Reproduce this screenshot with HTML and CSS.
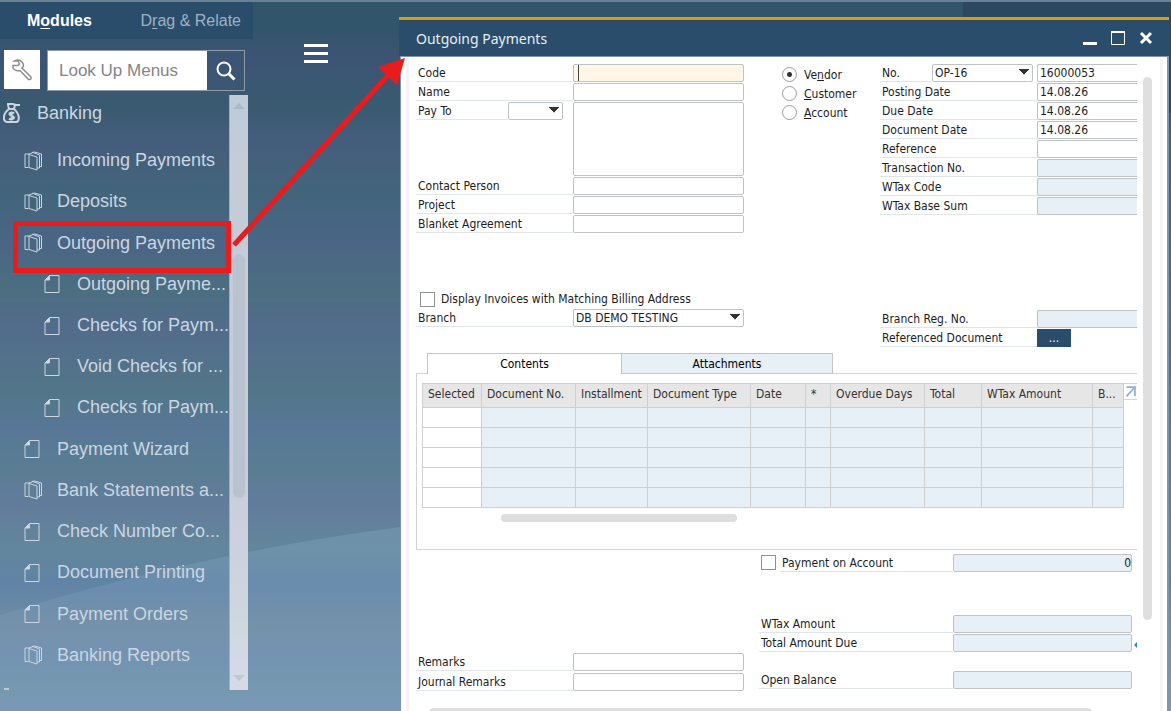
FILE: index.html
```html
<!DOCTYPE html>
<html lang="en">
<head>
  <meta charset="UTF-8" />
  <meta name="viewport" content="width=device-width, initial-scale=1.0" />
  <title>Outgoing Payments</title>
  <link rel="stylesheet" href="styles.css">
</head>
<body>

<!-- Shared icons -->
<svg class="sprite" aria-hidden="true">
  <symbol id="folder" viewBox="0 0 18 20">
    <path d="M5 3H1v13.500h3.500M5 3v13.500l8 2.500V6L5 3.500M5 3l4-1.500 6.500 2.500V17H13M8 1.500 10.500 1l7 2v12.500h-2" />
  </symbol>
  <symbol id="page" viewBox="0 0 18 20">
    <path d="M5.500 1.500H15v17H1V6z" />
    <path class="fold" d="M5.500 1.500V6H1z" />
  </symbol>
</svg>

<!-- Desktop wallpaper curve -->
<svg class="wave" viewBox="0 0 400 184" preserveAspectRatio="none" aria-hidden="true">
  <defs>
    <linearGradient id="waveFill" x1="0" y1="0" x2="0" y2="1">
      <stop offset="0" stop-color="#8fb0cc" stop-opacity=".3" />
      <stop offset="1" stop-color="#8fb0cc" stop-opacity="0" />
    </linearGradient>
  </defs>
  <path d="M0 88Q190 28 400 0V184H0z" fill="url(#waveFill)" />
</svg>

<div class="desktop">

  <!-- Main Menu -->
  <aside class="sidebar">
    <div class="tabs">
      <button class="tab active">M<u>o</u>dules</button>
      <button class="tab">D<u>r</u>ag &amp; Relate</button>
    </div>

    <div class="search">
      <button class="tool" aria-label="Menu settings">
        <svg viewBox="0 0 22 22"><path d="M2 6.500h5L8.500 5 7 2H3.500Q8-.500 11 3t0 6l9 9q.5 3-2.500 2.500L9 11.500Q4 12.500 2 9z" /></svg>
      </button>
      <div class="search-box">
        <input type="text" aria-label="Look Up Menus" placeholder="Look Up Menus" />
        <button aria-label="Search">
          <svg viewBox="0 0 20 20"><circle cx="8" cy="8" r="6.500" /><path d="m12.500 12.500 6 6" stroke-width="3" /></svg>
        </button>
      </div>
    </div>

    <div class="menu">
      <nav>
        <a class="module" href="#">
          <svg viewBox="0 0 18 20"><path d="M4 1h6l3 1h4M5 2l1 4h5l1-4M6 6C-1 11 0 19 4 19h9c4 0 4-8-2-13" /><path d="M11 10.500C9.500 9 6 9.500 6.500 11.500c.5 1.500 4.500 1 4.500 3s-3.500 2.500-5 1M8.600 8.500v9" /></svg>
          Banking
        </a>
        <ul>
          <li><a href="#"><svg><use href="#folder" /></svg><span>Incoming Payments</span></a></li>
          <li><a href="#"><svg><use href="#folder" /></svg><span>Deposits</span></a></li>
          <li class="marked"><a href="#"><svg><use href="#folder" /></svg><span>Outgoing Payments</span></a></li>
          <li class="sub"><a href="#"><svg><use href="#page" /></svg><span>Outgoing Payme...</span></a></li>
          <li class="sub"><a href="#"><svg><use href="#page" /></svg><span>Checks for Paym...</span></a></li>
          <li class="sub"><a href="#"><svg><use href="#page" /></svg><span>Void Checks for ...</span></a></li>
          <li class="sub"><a href="#"><svg><use href="#page" /></svg><span>Checks for Paym...</span></a></li>
          <li><a href="#"><svg><use href="#page" /></svg><span>Payment Wizard</span></a></li>
          <li><a href="#"><svg><use href="#folder" /></svg><span>Bank Statements a...</span></a></li>
          <li><a href="#"><svg><use href="#page" /></svg><span>Check Number Co...</span></a></li>
          <li><a href="#"><svg><use href="#page" /></svg><span>Document Printing</span></a></li>
          <li><a href="#"><svg><use href="#page" /></svg><span>Payment Orders</span></a></li>
          <li><a href="#"><svg><use href="#folder" /></svg><span>Banking Reports</span></a></li>
        </ul>
        <!-- top edge of the next module's icon -->
        <i class="next-module"></i>
      </nav>
      <div class="menu-scroll">
        <i class="up"></i>
        <i class="thumb"></i>
        <i class="down"></i>
      </div>
    </div>
  </aside>

  <button class="burger" aria-label="Toggle menu"><i></i><i></i><i></i></button>

  <!-- Outgoing Payments window -->
  <main class="window">
    <header class="titlebar">
      <h1>Outgoing Payments</h1>
      <button aria-label="Minimize"><svg viewBox="0 0 14 14"><path d="M0 12.500h14" stroke-width="3" /></svg></button>
      <button aria-label="Maximize"><svg viewBox="0 0 14 14"><path d="M.5 1v12.500h13V1" /><path d="M0 1h14" stroke-width="2" /></svg></button>
      <button aria-label="Close"><svg viewBox="0 0 14 14"><path d="m2 2 10 10M12 2 2 12" stroke-width="3" /></svg></button>
    </header>

    <div class="window-body">
      <form class="content">

        <div class="head">
          <div class="fields">
            <div class="row"><label for="code">Code</label><input type="text" id="code" class="focus" /></div>
            <div class="row"><label for="name">Name</label><input type="text" id="name" /></div>
            <div class="row tall">
              <label for="payTo">Pay To</label>
              <select id="payTo"><option></option></select>
              <textarea aria-label="Pay to address"></textarea>
            </div>
            <div class="row"><label for="contact">Contact Person</label><input type="text" id="contact" /></div>
            <div class="row"><label for="project">Project</label><input type="text" id="project" /></div>
            <div class="row"><label for="blanket">Blanket Agreement</label><input type="text" id="blanket" /></div>
          </div>

          <div class="partner">
            <label><input type="radio" name="partner" checked /><span>Ve<u>n</u>dor</span></label>
            <label><input type="radio" name="partner" /><span><u>C</u>ustomer</span></label>
            <label><input type="radio" name="partner" /><span><u>A</u>ccount</span></label>
          </div>

          <div class="fields cut">
            <div class="row number">
              <label for="docNo">No.</label>
              <select id="series" aria-label="Series"><option>OP-16</option></select>
              <input type="text" id="docNo" value="16000053" />
            </div>
            <div class="row"><label for="posting">Posting Date</label><input type="text" id="posting" value="14.08.26" /></div>
            <div class="row"><label for="due">Due Date</label><input type="text" id="due" value="14.08.26" /></div>
            <div class="row"><label for="docDate">Document Date</label><input type="text" id="docDate" value="14.08.26" /></div>
            <div class="row"><label for="reference">Reference</label><input type="text" id="reference" /></div>
            <div class="row"><label for="transNo">Transaction No.</label><input type="text" id="transNo" readonly /></div>
            <div class="row"><label for="wtaxCode">WTax Code</label><input type="text" id="wtaxCode" readonly /></div>
            <div class="row"><label for="wtaxBase">WTax Base Sum</label><input type="text" id="wtaxBase" readonly /></div>
          </div>
        </div>

        <div class="head branch">
          <div class="fields">
            <label class="check"><input type="checkbox" />Display Invoices with Matching Billing Address</label>
            <div class="row">
              <label for="branch">Branch</label>
              <select id="branch"><option>DB DEMO TESTING</option></select>
            </div>
          </div>
          <div class="fields cut last">
            <div class="row"><label for="regNo">Branch Reg. No.</label><input type="text" id="regNo" readonly /></div>
            <div class="row"><label for="refDoc">Referenced Document</label><button type="button" id="refDoc">...</button></div>
          </div>
        </div>

        <div class="doc-tabs">
          <button type="button" class="active">Contents</button>
          <button type="button">Attachments</button>
        </div>

        <div class="panel">
          <div class="grid-wrap">
            <table>
              <colgroup>
                <col class="c-selected"><col class="c-days"><col class="c-inst"><col class="c-type"><col class="c-date">
                <col class="c-star"><col class="c-days"><col class="c-total"><col class="c-wtax"><col>
              </colgroup>
              <thead>
                <tr>
                  <th>Selected</th><th>Document No.</th><th>Installment</th><th>Document Type</th><th>Date</th>
                  <th>*</th><th>Overdue Days</th><th>Total</th><th>WTax Amount</th><th>B...</th>
                </tr>
              </thead>
              <tbody>
                <tr><td></td><td></td><td></td><td></td><td></td><td></td><td></td><td></td><td></td><td></td></tr>
                <tr><td></td><td></td><td></td><td></td><td></td><td></td><td></td><td></td><td></td><td></td></tr>
                <tr><td></td><td></td><td></td><td></td><td></td><td></td><td></td><td></td><td></td><td></td></tr>
                <tr><td></td><td></td><td></td><td></td><td></td><td></td><td></td><td></td><td></td><td></td></tr>
                <tr><td></td><td></td><td></td><td></td><td></td><td></td><td></td><td></td><td></td><td></td></tr>
              </tbody>
            </table>
            <button type="button" class="expand" aria-label="Expand table">
              <svg viewBox="0 0 13 17"><path d="M2 3.500h11M11.500 3v11M2 14 11 4" /></svg>
            </button>
          </div>
          <div class="hscroll"></div>
        </div>

        <div class="totals">
          <div class="fields remarks">
            <div class="row"><label for="remarks">Remarks</label><input type="text" id="remarks" /></div>
            <div class="row"><label for="journal">Journal Remarks</label><input type="text" id="journal" /></div>
          </div>
          <div class="fields sums">
            <div class="row on-account">
              <input type="checkbox" id="onAccount" />
              <label for="onAccount">Payment on Account</label>
              <input type="text" aria-label="Payment on account amount" value="0" readonly />
            </div>
            <div class="row"><label for="wtaxAmount">WTax Amount</label><input type="text" id="wtaxAmount" readonly /></div>
            <div class="row due"><label for="totalDue">Total Amount Due</label><input type="text" id="totalDue" readonly /></div>
            <div class="row balance"><label for="openBalance">Open Balance</label><input type="text" id="openBalance" readonly /></div>
          </div>
        </div>

        <div class="window-hscroll"></div>
      </form>
      <div class="window-vscroll"></div>
    </div>
  </main>
</div>

<!-- Arrow from the menu item to the window -->
<svg class="arrow" viewBox="0 0 175 195" aria-hidden="true">
  <path class="line" d="M4 190 160 18" />
  <path class="tip" d="M175 3 167 30 148 12z" />
</svg>

</body>
</html>
```

FILE: styles.css
```css
* { box-sizing: border-box; }
body {
  margin: 0;
  height: 100vh;
  overflow: hidden;
  position: relative;
  font-family: "DejaVu Sans Condensed", "Noto Sans", sans-serif;
  font-size: 12px;
  color: #1c1c1c;
  border-top: 2px solid #6b8095;
  background:
    linear-gradient(#2a4860, #2a4860) right top / 208px 113px no-repeat,
    linear-gradient(#31556a 0, #31556a 4%, #3d5474 8%, #395a70 15%, #455d7c 20%, #42657b 27%, #4a6585 34%, #4b6e80 41%, #526c8c 46%, #527789 56%, #587797 60%, #5a7d92 66%, #627c9c 71%, #62879b 77%, #6083a6 82%, #718da4 88%, #7190b0 92%, #7498ae 97%, #7a97b8 100%);
}
button {
  font: inherit;
  padding: 0;
  border: none;
  background: none;
  cursor: pointer;
}
svg { display: block; fill: none; }
.sprite { position: absolute; width: 0; height: 0; }
.wave {
  position: absolute;
  left: 0;
  bottom: 0;
  width: 400px;
  height: 184px;
}
.desktop {
  position: relative;
  display: flex;
  align-items: flex-start;
  height: 100%;
}

/* Main menu */
.sidebar {
  flex: none;
  width: 253px;
  font-family: "Liberation Sans", Arial, sans-serif;
  font-size: 18px;
}
.tabs {
  display: flex;
  justify-content: space-between;
  height: 37px;
  padding: 0 12px 0 27px;
  font-size: 16px;
  background: #2a4d6c;
}
.tab { color: #9fb1c3; }
.tab.active { color: #fff; font-weight: bold; }
.tab u { text-underline-offset: 2px; }
.search {
  display: flex;
  gap: 7px;
  padding: 11px 8px 0 4px;
}
.tool {
  flex: none;
  width: 36px;
  height: 39px;
  background: #fff;
}
.tool svg {
  width: 22px;
  height: 22px;
  margin: auto;
  stroke: #8c8c8c;
  stroke-width: 1.500;
}
.search-box {
  flex: 1;
  display: flex;
  min-width: 0;
  height: 41px;
  border: 1px solid #8e9aaa;
}
.search-box input {
  flex: 1;
  min-width: 0;
  border: none;
  padding: 0 11px;
  font: inherit;
  font-size: 17px;
}
.search-box input::placeholder { color: #858585; }
.search-box button { flex: none; width: 37px; }
.search-box svg {
  width: 20px;
  height: 20px;
  margin: auto;
  stroke: #fff;
  stroke-width: 2;
}
.menu {
  display: flex;
  width: 248px;
  height: 595px;
  margin-top: 4px;
}
.menu nav { flex: 1; min-width: 0; }
.menu a {
  display: flex;
  align-items: center;
  color: #cbd6e0;
  text-decoration: none;
  white-space: nowrap;
}
.menu nav svg {
  flex: none;
  width: 18px;
  height: 20px;
  stroke: #cbd6e0;
}
.fold { fill: #cbd6e0; }
.menu .module {
  height: 36px;
  gap: 16px;
  padding-left: 3px;
}
.menu .module svg { stroke-width: 2; }
.menu ul {
  display: grid;
  grid-auto-rows: 1fr;
  height: 536px;
  margin: 9px 0 0;
  padding: 0;
  list-style: none;
}
.menu li { position: relative; display: flex; padding-left: 24px; }
.menu li.sub { padding-left: 44px; }
.menu li a { gap: 15px; }
.marked::after {
  content: "";
  position: absolute;
  top: -1px;
  left: 13px;
  right: -2px;
  bottom: -9px;
  border: 5px solid #e81c1c;
}
.next-module {
  display: block;
  width: 5px;
  height: 2px;
  margin: 12px 0 0 4px;
  background: #b9cbd8;
}
.menu-scroll {
  display: flex;
  flex-direction: column;
  align-items: center;
  width: 19px;
  background: linear-gradient(#bccdd8 0, #c5cbd7 10%, #c8ccd8 60%, #cdd0de 75%, #cdd8de 88%, #d8d9e8 100%);
  border-left: 1px solid #9db0c2;
}
.menu-scroll .up {
  margin-top: 8px;
  border: 6px solid transparent;
  border-top: none;
  border-bottom-color: #a9bbc6;
}
.menu-scroll .thumb {
  width: 12px;
  height: 244px;
  margin-top: 145px;
  border-radius: 6px;
  background: #b9c3cf;
}
.menu-scroll .down {
  margin-top: auto;
  margin-bottom: 9px;
  border: 6px solid transparent;
  border-bottom: none;
  border-top-color: #bccbd2;
}
.burger {
  flex: none;
  width: 24px;
  margin: 42px 71px 0 51px;
}
.burger i {
  display: block;
  height: 3px;
  margin-bottom: 5px;
  background: #fff;
}

/* Window */
.window {
  flex: 1;
  display: flex;
  flex-direction: column;
  min-width: 0;
  height: calc(100% - 15px);
  margin: 15px 2px 0 0;
  border-top: 3px solid #dc9b08;
}
.titlebar {
  display: flex;
  align-items: center;
  gap: 14px;
  height: 36px;
  padding: 0 16px 0 17px;
  background: #2a4d6b;
}
.titlebar h1 {
  flex: 1;
  margin: 0;
  font-family: "Noto Sans", sans-serif;
  font-size: 14px;
  font-weight: normal;
  color: #e9eef3;
}
.titlebar svg {
  width: 14px;
  height: 14px;
  stroke: #fff;
  stroke-width: 1;
}
.window-body {
  flex: 1;
  display: flex;
  min-height: 0;
  margin-left: 1px;
  padding: 0 4px 0 5px;
  border: 1px solid #7d96ae;
  border-right-width: 2px;
  border-bottom: none;
  background: #fff;
}
.content {
  flex: 1;
  min-width: 0;
  padding: 7px 0 0 7px;
  border-left: 3px solid #f6f3f7;
}
.window-vscroll {
  flex: none;
  width: 26px;
  border-right: 3px solid #f6f3f7;
}
.window-vscroll::before {
  content: "";
  display: block;
  width: 9px;
  height: 543px;
  margin: 20px 0 0 6px;
  border-radius: 5px;
  background: #dfdfdf;
}

/* Form fields */
.head {
  display: grid;
  grid-template-columns: minmax(0, 328fr) 98px minmax(0, 257fr);
  column-gap: 19px;
  min-height: 226px;
}
.fields {
  display: flex;
  flex-direction: column;
  gap: 1px;
}
.row { display: flex; height: 18px; }
.row > label {
  flex: none;
  width: 157px;
  height: 18px;
  padding: 2px 0 0 2px;
  line-height: 15px;
  border-bottom: 1px solid #dfe5e8;
  white-space: nowrap;
}
.row input[type="text"], select, textarea {
  flex: 1;
  min-width: 0;
  height: 18px;
  padding: 0 2px;
  font: inherit;
  color: inherit;
  border: 1px solid #bfc3c5;
  border-radius: 2px;
  background: #fff;
}
.row input[type="text"][readonly] { background: #e7eff7; }
.row input[type="text"].focus {
  background: linear-gradient(#444, #444) 4px 0 / 1px 16px no-repeat #fff6e6;
}
select {
  appearance: none;
  background:
    linear-gradient(to bottom left, #333 50%, transparent 51%) right 8px top 4px / 5px 6px no-repeat,
    linear-gradient(to bottom right, #333 50%, transparent 51%) right 3px top 4px / 5px 6px no-repeat,
    #fff;
}
.row.tall { height: 74px; }
.tall label { width: 92px; }
.tall select { flex: none; width: 55px; margin-right: 10px; }
.row textarea { height: 74px; resize: none; }
.cut .row input[type="text"] {
  border-right: none;
  border-radius: 2px 0 0 2px;
}
.number label { width: 52px; }
.number select { flex: none; width: 101px; margin-right: 4px; }
.partner { padding: 1px 0 0 19px; }
.partner label {
  display: flex;
  align-items: center;
  gap: 7px;
  height: 19px;
}
input[type="radio"] {
  appearance: none;
  flex: none;
  width: 15px;
  height: 15px;
  margin: 0;
  border: 1px solid #9a9a9a;
  border-radius: 50%;
}
input[type="radio"]:checked { background: radial-gradient(#333 0 2px, #fff 3px); }
input[type="checkbox"] {
  appearance: none;
  flex: none;
  width: 15px;
  height: 15px;
  margin: 0;
  border: 1px solid #8d9293;
  background: #fff;
}
.branch { min-height: 63px; }
.branch .last { grid-column: 3; padding-top: 20px; }
.check {
  display: flex;
  align-items: center;
  gap: 6px;
  height: 18px;
  padding-left: 4px;
  white-space: nowrap;
}
#refDoc {
  width: 34px;
  line-height: 14px;
  background: #2a4d6b;
  color: #fff;
}

/* Contents tab */
.doc-tabs { display: flex; padding-left: 11px; }
.doc-tabs button {
  width: 212px;
  height: 21px;
  border: 1px solid #c3c5c8;
  background: #e7eff7;
}
.doc-tabs .active {
  position: relative;
  width: 194px;
  border-right: none;
  border-bottom: none;
  background: #fff;
}
.panel {
  height: 177px;
  margin-top: -1px;
  padding: 9px 0 0 5px;
  border: 1px solid #d3d3d3;
  border-right: none;
}
.grid-wrap { display: flex; align-items: flex-start; }
table {
  flex: 1;
  width: 100%;
  table-layout: fixed;
  border-collapse: collapse;
}
.c-selected { width: 59px; }
.c-days { width: 94px; }
.c-inst { width: 72px; }
.c-type { width: 103px; }
.c-date { width: 55px; }
.c-star { width: 25px; }
.c-total { width: 57px; }
.c-wtax { width: 111px; }
th, td { border: 1px solid #cdcfd0; }
th {
  height: 24px;
  padding: 0 0 3px 5px;
  font-weight: normal;
  text-align: left;
  white-space: nowrap;
  color: #333;
  background: #e6e6e6;
}
td { height: 20px; padding: 0; background: #e7eff7; }
td:first-child { background: #fff; }
.expand svg {
  width: 13px;
  height: 17px;
  stroke: #8fb0d8;
  stroke-width: 2;
  border: solid #c5d8ec;
  border-width: 1px 0;
}
.hscroll {
  width: 33%;
  height: 8px;
  margin: 6px 0 0 79px;
  border-radius: 4px;
  background: #dedede;
}

/* Totals */
.totals {
  display: grid;
  grid-template-columns: minmax(0, 328fr) minmax(0, 373fr);
  column-gap: 15px;
  padding: 4px 5px 0 0;
}
.remarks { padding-top: 99px; gap: 2px; }
.sums .row > label { width: 194px; }
.on-account { margin-bottom: 42px; }
.sums .on-account > label { width: 173px; }
.on-account input[type="checkbox"] { margin: 1px 4px 0 2px; }
.row.on-account input[type="text"] { padding: 0; text-align: right; }
.due { position: relative; }
.due::after {
  content: "";
  position: absolute;
  top: 8px;
  right: -5px;
  border: 3px solid transparent;
  border-left: none;
  border-right-color: #2f86bd;
}
.balance { margin-top: 18px; }
.window-hscroll {
  width: 92%;
  height: 9px;
  margin: 17px 0 0 13px;
  border-radius: 5px;
  background: #dfdfdf;
}

/* Pointer arrow */
.arrow {
  position: absolute;
  top: 53px;
  left: 230px;
  width: 175px;
  height: 195px;
}
.arrow .line { stroke: #e81c1c; stroke-width: 5; }
.arrow .tip { fill: #e81c1c; }
```
